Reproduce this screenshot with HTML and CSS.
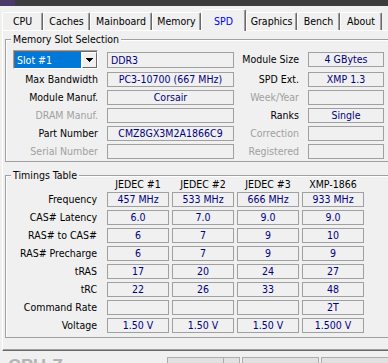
FILE: index.html
```html
<!DOCTYPE html>
<html>
<head>
<meta charset="utf-8">
<link rel="stylesheet" href="styles.css">
</head>
<body>
<div class="titlebar"><span class="app-icon"></span></div>
<div class="tabs">
  <div class="tab tab-cpu">CPU</div>
  <div class="tab tab-caches">Caches</div>
  <div class="tab tab-mainboard">Mainboard</div>
  <div class="tab tab-memory">Memory</div>
  <div class="tab tab-spd active">SPD</div>
  <div class="tab tab-graphics">Graphics</div>
  <div class="tab tab-bench">Bench</div>
  <div class="tab tab-about">About</div>
</div>
<div class="panel">
  <fieldset class="group slots">
    <legend>Memory Slot Selection</legend>
    <div class="slot-grid">
      <div class="combo">
        <span class="combo-value">Slot #1</span>
        <span class="combo-btn"><svg width="7" height="4" viewBox="0 0 7 4" shape-rendering="crispEdges"><path d="M0 0H7V1H6V2H5V3H4V4H3V3H2V2H1V1H0Z" fill="#000"/></svg></span>
      </div>
      <div class="field wide left">DDR3</div>
      <div class="lbl">Module Size</div>
      <div class="field narrow">4 GBytes</div>

      <div class="lbl">Max Bandwidth</div>
      <div class="field wide">PC3-10700 (667 MHz)</div>
      <div class="lbl">SPD Ext.</div>
      <div class="field narrow">XMP 1.3</div>

      <div class="lbl">Module Manuf.</div>
      <div class="field wide">Corsair</div>
      <div class="lbl dis">Week/Year</div>
      <div class="field narrow"></div>

      <div class="lbl dis">DRAM Manuf.</div>
      <div class="field wide"></div>
      <div class="lbl">Ranks</div>
      <div class="field narrow">Single</div>

      <div class="lbl">Part Number</div>
      <div class="field wide">CMZ8GX3M2A1866C9</div>
      <div class="lbl dis">Correction</div>
      <div class="field narrow"></div>

      <div class="lbl dis">Serial Number</div>
      <div class="field wide"></div>
      <div class="lbl dis">Registered</div>
      <div class="field narrow"></div>
    </div>
  </fieldset>

  <fieldset class="group timings">
    <legend>Timings Table</legend>
    <div class="timing-grid">
      <div></div>
      <div class="head">JEDEC #1</div>
      <div class="head">JEDEC #2</div>
      <div class="head">JEDEC #3</div>
      <div class="head">XMP-1866</div>

      <div class="tlbl">Frequency</div>
      <div class="cell">457 MHz</div><div class="cell">533 MHz</div><div class="cell">666 MHz</div><div class="cell">933 MHz</div>

      <div class="tlbl">CAS# Latency</div>
      <div class="cell">6.0</div><div class="cell">7.0</div><div class="cell">9.0</div><div class="cell">9.0</div>

      <div class="tlbl">RAS# to CAS#</div>
      <div class="cell">6</div><div class="cell">7</div><div class="cell">9</div><div class="cell">10</div>

      <div class="tlbl">RAS# Precharge</div>
      <div class="cell">6</div><div class="cell">7</div><div class="cell">9</div><div class="cell">9</div>

      <div class="tlbl">tRAS</div>
      <div class="cell">17</div><div class="cell">20</div><div class="cell">24</div><div class="cell">27</div>

      <div class="tlbl">tRC</div>
      <div class="cell">22</div><div class="cell">26</div><div class="cell">33</div><div class="cell">48</div>

      <div class="tlbl">Command Rate</div>
      <div class="cell"></div><div class="cell"></div><div class="cell"></div><div class="cell">2T</div>

      <div class="tlbl">Voltage</div>
      <div class="cell">1.50 V</div><div class="cell">1.50 V</div><div class="cell">1.50 V</div><div class="cell">1.500 V</div>
    </div>
  </fieldset>
</div>
<div class="footer">
  <div class="brand">CPU-Z</div>
  <div class="btn btn-tools"><span class="btn-text">Tools</span><span class="btn-split"></span></div>
  <div class="btn btn-validate">Validate</div>
  <div class="btn btn-close">Close</div>
</div>
</body>
</html>
```

FILE: styles.css
```css
html, body {
  margin: 0;
  padding: 0;
}

body {
  width: 388px;
  height: 363px;
  overflow: hidden;
  background: #f0f0f0;
  font-family: "DejaVu Sans Condensed", "Liberation Sans", sans-serif;
  font-size: 10.5px;
  color: #000;
}

.titlebar {
  height: 6px;
  background: #3d3d3d;
}

.app-icon {
  display: block;
  width: 15px;
  height: 6px;
  background: #4a3868;
}

/* ---------- tabs ---------- */
.tabs {
  display: flex;
  align-items: flex-end;
  height: 21px;
  margin: 3px 0 0 2px;
}

.tab {
  box-sizing: border-box;
  height: 18px;
  padding-top: 1px;
  line-height: 14px;
  text-align: center;
  white-space: nowrap;
  background: #f0f0f0;
  border-top: 1px solid #fff;
  border-left: 1px solid #fff;
  border-right: 1px solid #696969;
  border-top-left-radius: 2px;
  border-top-right-radius: 2px;
  box-shadow: inset -1px 0 0 #a0a0a0;
}

.tab-cpu { width: 41px; }
.tab-caches { width: 47px; }
.tab-mainboard { width: 62px; }
.tab-memory { width: 49px; }
.tab-spd { width: 45px; }
.tab-graphics { width: 51px; }
.tab-bench { width: 43px; }
.tab-about { width: 42px; }

.tab.active {
  position: relative;
  z-index: 1;
  height: 22px;
  margin-bottom: -1px;
  padding-top: 4px;
  color: #0000ff;
}

/* ---------- panel ---------- */
.panel {
  box-sizing: border-box;
  width: 394px;
  margin-left: 2px;
  padding: 0 0 12px 1px;
  border-top: 1px solid #fff;
  border-left: 1px solid #fff;
  border-bottom: 1px solid #696969;
  box-shadow: inset 0 -1px 0 #a0a0a0;
}

.group {
  min-width: 0;
  margin: 0 0 0 1px;
  border: 1px solid #a0a0a0;
  box-shadow: inset 1px 1px 0 #fff;
}

.group legend {
  margin-left: 5px;
  padding: 0 2px;
  background: #f0f0f0;
  white-space: nowrap;
}

.slots {
  margin-top: 2px;
  padding: 5px 0 2px 0;
}

.slots legend {
  line-height: 12px;
}

.timings {
  margin-top: 8px;
  padding: 0 0 4px 0;
}

.timings legend {
  line-height: 10px;
}

/* ---------- slot grid ---------- */
.slot-grid {
  display: grid;
  grid-template-columns: 92px 136px 65px 85px;
  grid-template-rows: 19px repeat(5, 15px);
  row-gap: 3px;
  align-items: center;
}

.lbl {
  justify-self: end;
  white-space: nowrap;
  line-height: 13px;
}

.dis {
  color: #a0a0a0;
}

.field {
  box-sizing: border-box;
  justify-self: end;
  height: 15px;
  border: 1px solid #a0a0a0;
  color: #000080;
  line-height: 13px;
  text-align: center;
  white-space: nowrap;
  overflow: hidden;
}

.field.wide { width: 127px; }
.field.narrow { width: 76px; }

.field.left {
  height: 16px;
  text-align: left;
  padding-left: 3px;
  line-height: 14px;
}

.combo {
  box-sizing: border-box;
  justify-self: end;
  width: 85px;
  height: 19px;
  display: flex;
  gap: 1px;
  padding: 1px 0 0 1px;
  background: #fff;
  border: 1px solid;
  border-color: #a0a0a0 #fff #fff #a0a0a0;
  box-shadow: inset 1px 1px 0 #696969;
}

.combo-value {
  width: 66px;
  height: 16px;
  padding-left: 2px;
  box-sizing: border-box;
  background: #0078d7;
  color: #fff;
  line-height: 16px;
  white-space: nowrap;
}

.combo-btn {
  box-sizing: border-box;
  width: 15px;
  height: 16px;
  display: flex;
  align-items: center;
  justify-content: center;
  background: #f0f0f0;
  border: 1px solid;
  border-color: #fff #696969 #696969 #fff;
}

/* ---------- timings grid ---------- */
.timing-grid {
  display: grid;
  margin-top: -1px;
  grid-template-columns: 98px repeat(4, 62px);
  grid-template-rows: 10px repeat(8, 15px);
  column-gap: 3px;
  row-gap: 3px;
  align-items: center;
}

.head {
  text-align: center;
  line-height: 10px;
  white-space: nowrap;
}

.tlbl {
  text-align: right;
  padding-right: 7px;
  white-space: nowrap;
  line-height: 13px;
}

.cell {
  box-sizing: border-box;
  height: 15px;
  border: 1px solid #a0a0a0;
  color: #000080;
  line-height: 13px;
  text-align: center;
  white-space: nowrap;
}

/* ---------- footer ---------- */
.footer {
  display: grid;
  grid-template-columns: 157px 73px 77px 77px;
  column-gap: 2px;
  align-items: start;
  padding: 6px 0 0 8px;
}

.brand {
  font-family: "Liberation Sans", sans-serif;
  font-weight: bold;
  font-size: 18px;
  line-height: 18px;
  color: #b4b4b4;
}

.btn {
  box-sizing: border-box;
  height: 23px;
  border: 1px solid #adadad;
  background: #e1e1e1;
  text-align: center;
  line-height: 21px;
}

.btn-tools {
  display: flex;
}

.btn-text {
  flex: 1;
}

.btn-split {
  width: 15px;
  border-left: 1px solid #adadad;
}
```
